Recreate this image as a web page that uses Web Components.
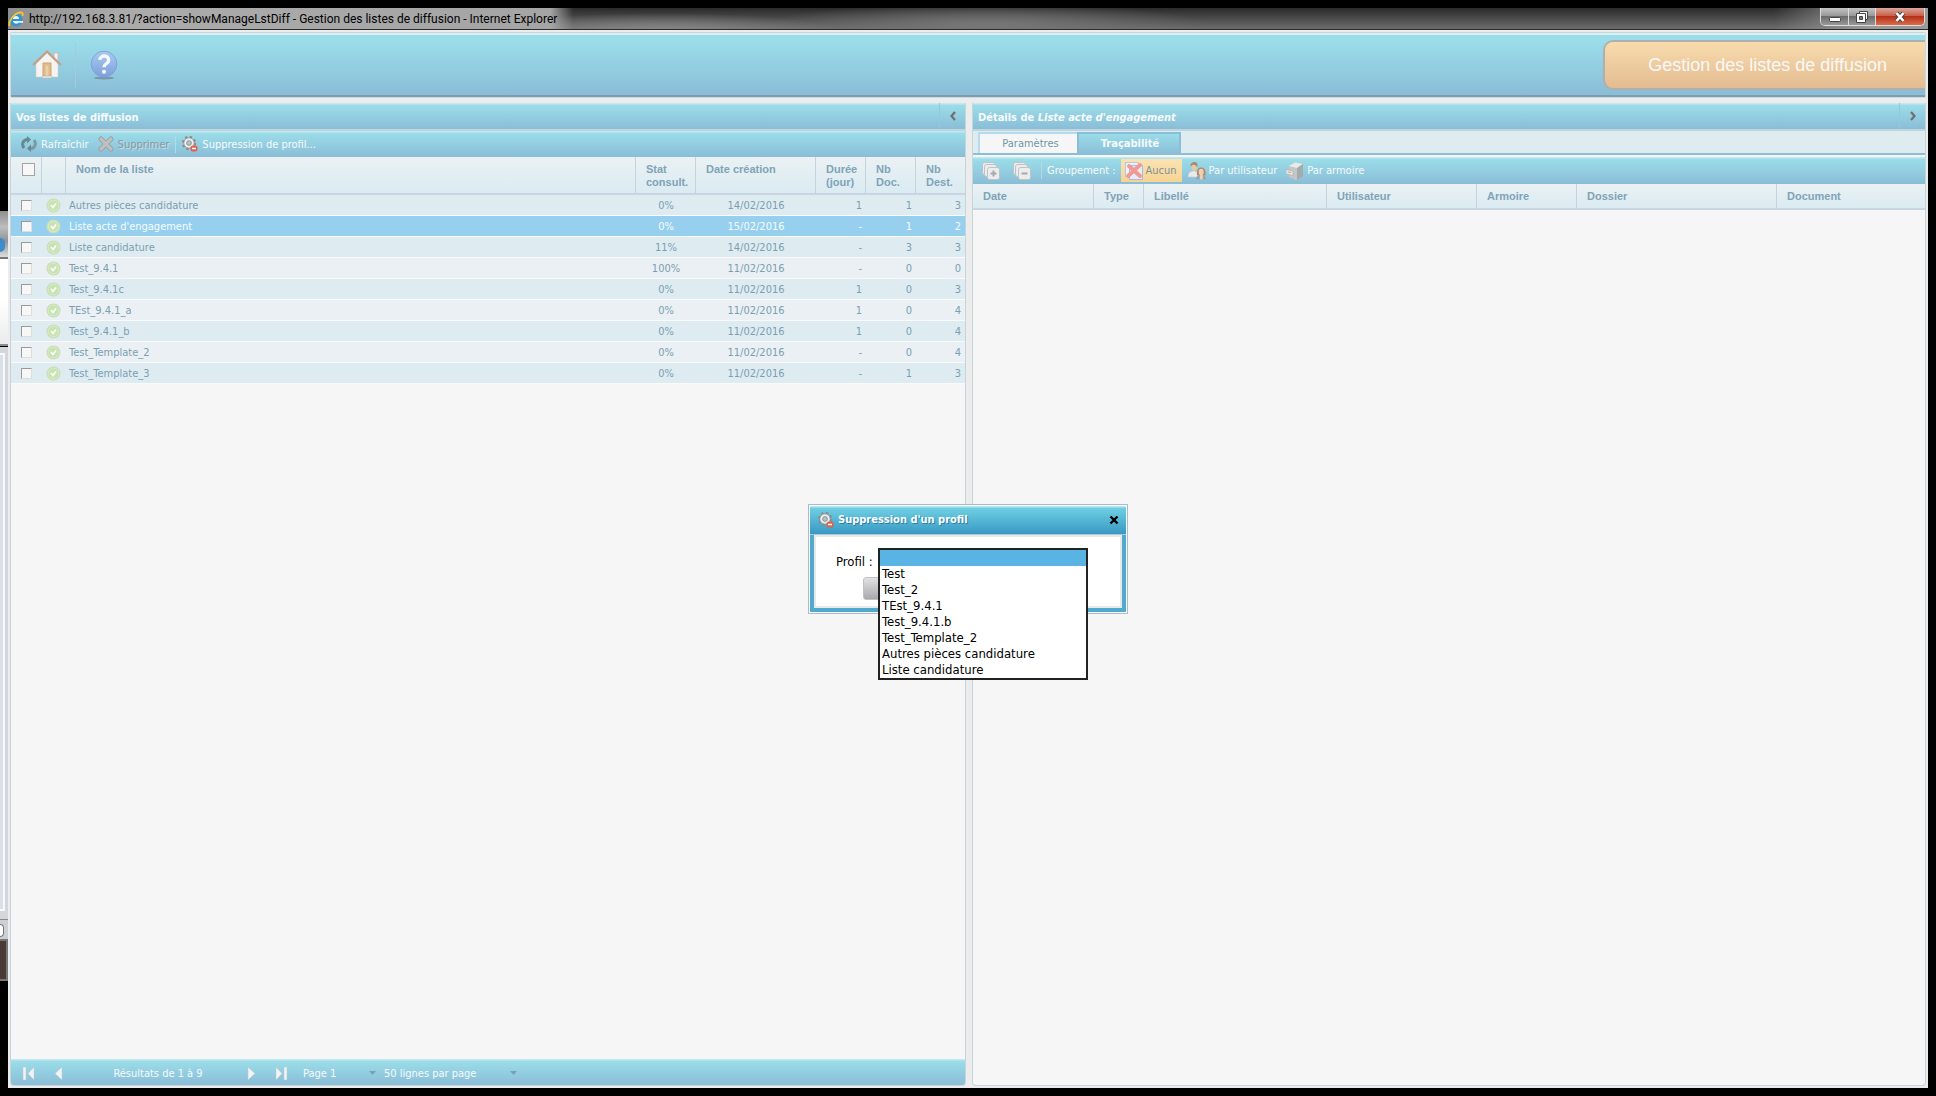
<!DOCTYPE html>
<html lang="fr">
<head>
<meta charset="utf-8">
<title>Gestion des listes de diffusion</title>
<style>
  html, body { height: 100%; }
  body {
    margin: 0;
    background: #000;
    font-family: "DejaVu Sans Condensed", "DejaVu Sans", sans-serif;
    font-size: 11px;
    line-height: 13px;
    overflow: hidden;
  }
</style>
</head>
<body>
<desktop-frame>
  <title-bar slot="title" heading="http://192.168.3.81/?action=showManageLstDiff - Gestion des listes de diffusion - Internet Explorer"></title-bar>
  <app-header heading="Gestion des listes de diffusion"></app-header>
  <split-view>
    <app-panel slot="left" arrow="left">
      <span slot="heading">Vos listes de diffusion</span>
      <tool-bar slot="bar">
        <tool-button icon="refresh">Rafraîchir</tool-button>
        <tool-button icon="cross-off" off>Supprimer</tool-button>
        <tool-separator></tool-separator>
        <tool-button icon="gear">Suppression de profil...</tool-button>
      </tool-bar>
      <diffusion-table></diffusion-table>
      <pager-bar slot="footer"></pager-bar>
    </app-panel>
    <app-panel slot="right" arrow="right">
      <span slot="heading">Détails de <i>Liste acte d'engagement</i></span>
      <tab-strip slot="bar"></tab-strip>
      <tool-bar slot="bar" wide>
        <tool-button icon="stack-plus" label="Tout déplier"></tool-button>
        <tool-button icon="stack-minus" label="Tout replier"></tool-button>
        <tool-separator></tool-separator>
        <tool-label>Groupement :</tool-label>
        <tool-button icon="cross-sheet" pressed>Aucun</tool-button>
        <tool-button icon="users">Par utilisateur</tool-button>
        <tool-button icon="cabinet">Par armoire</tool-button>
      </tool-bar>
      <history-table></history-table>
    </app-panel>
  </split-view>
  <profile-dialog slot="dialog"></profile-dialog>
</desktop-frame>

<script>
const ICONS = {
  ie: ['0 0 16 16', `
    <circle cx="8" cy="9" r="6.500" fill="#2f93d8"/>
    <path d="M5 8a3 3 0 0 1 6 0z" fill="#e8f4fb"/>
    <path d="M5 10h10v1.800h-4.500C9 13.300 5.500 13 5 10z" fill="#e8f4fb"/>
    <path d="M1.500 15C0 10 6 2.500 12 1.500c3-.3 3.200 1.500 2.300 3.500" fill="none" stroke="#f4c430" stroke-width="1.800"/>`],
  home: ['0 0 30 30', `
    <path d="M22 3h4v9h-4z" fill="#f5f3f0" stroke="#c9b8a8" stroke-width=".8"/>
    <path d="M4 14L15 3l11 11v13H4z" fill="#f6f4f2" stroke="#d5cdc6" stroke-width=".6"/>
    <path d="M1 15L15 1.500 29 15" fill="none" stroke="#c3a08c" stroke-width="2.200"/>
    <path d="M11 13h8v13h-8z" fill="#e9c191" stroke="#c99f72"/>
    <path d="M13 15h4v11h-4z" fill="#efd0a6" stroke="#d6ae80" stroke-width=".7"/>
    <path d="M10 26h10v2H10z" fill="#ececec" stroke="#bbb" stroke-width=".6"/>`],
  help: ['0 0 30 32', `
    <defs><linearGradient id="g" x1="0" y1="0" x2="0" y2="1"><stop offset="0" stop-color="#a5cdef"/><stop offset="1" stop-color="#7f9fdc"/></linearGradient></defs>
    <ellipse cx="15" cy="30" rx="11" ry="1.500" fill="#7898ad"/>
    <circle cx="15" cy="15" r="13.800" fill="url(#g)" stroke="#7fa0d8"/>
    <path d="M10.500 10.500c.5-5.500 9.500-5.500 9.500.3 0 3.500-5 3.700-5 7.700" fill="none" stroke="#f6f8fb" stroke-width="3.600"/>
    <circle cx="15" cy="23.200" r="2.200" fill="#f6f8fb"/>`],
  refresh: ['0 0 16 16', `
    <path d="M3 12C0 8 2.500 3.500 6.500 3.500" fill="none" stroke="#6b8791" stroke-width="3"/>
    <path d="M6 0l4 3.500-4 4z" fill="#6b8791"/>
    <path d="M13 4c3 4 .5 8.500-3.500 8.500" fill="none" stroke="#7c99a3" stroke-width="3"/>
    <path d="M10 16l-4-3.500 4-4z" fill="#6b8791"/>`],
  'cross-off': ['0 0 16 16', `
    <path d="M3 3l10 10M13 3L3 13" stroke="#9a9f9f" stroke-width="5" stroke-linecap="round"/>
    <path d="M3 3l10 10M13 3L3 13" stroke="#bcc0c0" stroke-width="3.200" stroke-linecap="round"/>`],
  gear: ['0 0 16 16', `
    <circle cx="7" cy="7" r="6" fill="none" stroke="#8d8d8d" stroke-width="2.400" stroke-dasharray="2.400 2.312"/>
    <circle cx="7" cy="7" r="4" fill="#c9d3d6" stroke="#eee" stroke-width="2.200"/>
    <circle cx="7" cy="7" r="5.200" fill="none" stroke="#949494" stroke-width=".8"/>
    <circle cx="7" cy="7" r="2.300" fill="#a8c8d3" stroke="#8d8d8d" stroke-width=".8"/>
    <rect x="8.500" y="9.500" width="7" height="6" rx="2.500" fill="#e2604b"/>
    <path d="M10 12.500h4" stroke="#fff" stroke-width="1.500"/>`],
  'stack-plus': ['0 0 18 18', `
    <g fill="#ececec" stroke="#bcc4c7"><rect x=".5" y=".5" width="12" height="12" rx="2"/><rect x="2.500" y="2.500" width="12" height="12" rx="2"/><rect x="5.500" y="5.500" width="12" height="12" rx="2"/></g>
    <path d="M8.500 11.500h6M11.500 8.500v6" stroke="#a3abae" stroke-width="2"/>`],
  'stack-minus': ['0 0 18 18', `
    <g fill="#ececec" stroke="#bcc4c7"><rect x=".5" y=".5" width="12" height="12" rx="2"/><rect x="2.500" y="2.500" width="12" height="12" rx="2"/><rect x="5.500" y="5.500" width="12" height="12" rx="2"/></g>
    <path d="M8.500 11.500h6" stroke="#a3abae" stroke-width="2"/>`],
  'cross-sheet': ['0 0 18 18', `
    <rect x=".5" y=".5" width="13" height="14" fill="#eef1f8" stroke="#b9c6dd"/>
    <rect x="4.500" y="3.500" width="13" height="14" fill="#e6ebf5" stroke="#a9bbda"/>
    <path d="M4 4l11 10M15 3L3 14" stroke="#f09a94" stroke-width="4" stroke-linecap="round"/>`],
  users: ['0 0 18 18', `
    <path d="M0 15c0-4 2-6 5.500-6s5.500 2 5.500 6z" fill="#eaeaea" stroke="#bfc6c8" stroke-width=".6"/>
    <path d="M3 3.500C3.500.5 8.500.3 9 3.500L8.500 7C8 9.500 4.500 9.500 4 7z" fill="#e8c8a8"/>
    <path d="M2.500 4.500C2 1 5 0 6.500 0c3 0 3.500 3 2.700 5.500C8.500 3 6 3 5 2.800z" fill="#a98a70"/>
    <path d="M8 17.500c0-3 1.500-4.500 5-4.500s5 1.500 5 4.500z" fill="#8fa9b3"/>
    <path d="M9 13.500C8.500 8 10 5.500 13.200 5.500S18 8 17.500 13.500z" fill="#ab8b6c"/>
    <ellipse cx="13.200" cy="10" rx="2.500" ry="3.200" fill="#f0cfab"/>
    <path d="M11.800 13h3v4.500h-3z" fill="#f0cfab"/>`],
  cabinet: ['0 0 18 18', `
    <path d="M3 4l6-3.500L17 2v12.500L10 18l-7-3z" fill="#c4c7c8"/>
    <path d="M3 4l6-3.500L17 2l-6 4z" fill="#eaeaea"/>
    <path d="M11 6l6-4v12.500L11 18z" fill="#a5aaac"/>
    <path d="M0 7.500L7 9v4.500L0 12z" fill="#e6e6e6" stroke="#a9aeb0" stroke-width=".6"/>
    <path d="M2 10l3 .5" stroke="#d8a860" stroke-width="1.200"/>`],
  check: ['0 0 15 15', `
    <circle cx="7.500" cy="7.500" r="7" fill="#c5dfb2"/>
    <circle cx="7.500" cy="7.500" r="5.400" fill="#c8e2b0" stroke="#e0eed6" stroke-width=".8"/>
    <path d="M5 7l2 2.500L10 5.500" fill="none" stroke="#fafcf8" stroke-width="1.800"/>`],
  left: ['0 0 6 10', `<path d="M5 1L1.500 5 5 9" fill="none" stroke="#6f6f6f" stroke-width="2.200"/>`],
  right: ['0 0 6 10', `<path d="M1 1l3.500 4L1 9" fill="none" stroke="#6f6f6f" stroke-width="2.200"/>`],
  first: ['0 0 12 13', `<path d="M0 0h3v13H0zM11 0v13L5 6.500z" fill="#f3f3f3" stroke="#b9c7cc" stroke-width=".5"/>`],
  prev: ['0 0 8 13', `<path d="M7 0v13L0 6.500z" fill="#f3f3f3" stroke="#b9c7cc" stroke-width=".5"/>`],
  next: ['0 0 8 13', `<path d="M1 0v13l7-6.500z" fill="#f3f3f3" stroke="#b9c7cc" stroke-width=".5"/>`],
  last: ['0 0 12 13', `<path d="M9 0h3v13H9zM1 0v13l6-6.500z" fill="#f3f3f3" stroke="#b9c7cc" stroke-width=".5"/>`],
  close: ['0 0 10 10', `<path d="M1.500 1.500l7 7M8.500 1.500l-7 7" stroke="#000" stroke-width="2.400"/>`],
  'win-min': ['0 0 12 12', `<rect x=".5" y="6.500" width="11" height="4" rx="1" fill="#fff" stroke="#444"/>`],
  'win-max': ['0 0 12 12', `<path d="M3.500.5h8v8h-8z" fill="#fff" stroke="#444"/><path d="M.5 2.500h9v9h-9z" fill="#fff" stroke="#444"/><path d="M3.500 5.500h3v3h-3z" fill="#777" stroke="#444"/>`],
  'win-close': ['0 0 12 12', `<path d="M2.500 2l7 8M9.500 2l-7 8" stroke="#444" stroke-width="4.200"/><path d="M2.500 2l7 8M9.500 2l-7 8" stroke="#fff" stroke-width="2.600"/>`],
};

function icon(name, w, h) {
  const [box, body] = ICONS[name];
  return `<svg viewBox="${box}" width="${w}" height="${h || w}" aria-hidden="true">${body}</svg>`;
}

function define(tag, render) {
  customElements.define(tag, class extends HTMLElement {
    connectedCallback() {
      if (this.shadowRoot) return;
      this.attachShadow({ mode: 'open' });
      this.shadowRoot.innerHTML = `
        <style>
          :host { display: block; box-sizing: border-box; }
          *, *::before { box-sizing: border-box; }
          svg { display: block; flex: none; }
          button, select, input { font: inherit; color: inherit; margin: 0; padding: 0; border: 0; background: none; }
        </style>` + render(this);
    }
  });
}

/* FRAME */
define('desktop-frame', () => `
  <style>
    :host { display: grid; grid-template-columns: 8px 1fr 8px; height: 100vh; padding: 8px 0; background: #000; }
    .behind { display: flex; flex-direction: column; padding-top: 203px; overflow: hidden; }
    .tray { flex: 0 0 48px; background: linear-gradient(#8f8f8f, #bdbdbd 16px, #8d9298 30px, #ddd); border-bottom: 2px solid #777; display: flex; align-items: end; }
    .tray i { width: 5px; height: 14px; margin-bottom: 5px; background: #3d8cc8; border-radius: 0 7px 7px 0; }
    .sheet { flex: 0 0 87px; background: linear-gradient(#fff 50%, #e9ebec); border-bottom: 2px solid #888d8f; }
    .side { flex: 0 1 572px; margin-top: 1px; background: #d4d7da; padding: 6px 3px 8px 0; }
    .side div { height: 100%; background: #dadfe8; border: 2px solid #f8f8ff; border-left: 0; }
    .knob { flex: 0 0 20px; border-top: 1px solid #888; background: #ccd0d3; padding-top: 4px; }
    .knob i { display: block; width: 4px; height: 13px; border: 1px solid #777; border-left: 0; border-radius: 0 6px 6px 0; background: #fff; }
    .task { flex: 0 0 42px; background: #4a3a36; border: 2px solid #777; border-left: 0; }
    .window { display: flex; flex-direction: column; min-width: 0; background: #ececec; position: relative; }
    .content { flex: 1; display: flex; flex-direction: column; min-height: 0; padding: 2px; gap: 5px; }
    .overlay { position: absolute; inset: 22px 0 0; display: flex; align-items: center; justify-content: center; }
  </style>
  <div class="behind">
    <div class="tray"><i></i></div><div class="sheet"></div><div class="side"><div></div></div>
    <div class="knob"><i></i></div><div class="task"></div>
  </div>
  <div class="window">
    <slot name="title"></slot>
    <div class="content"><slot></slot></div>
    <div class="overlay"><slot name="dialog"></slot></div>
  </div>`);

define('title-bar', el => `
  <style>
    :host {
      display: flex; align-items: flex-start; height: 22px; color: #000;
      border-bottom: 1px solid #2a2d2a;
      font: 12px/22px Roboto, "Noto Sans", sans-serif;
      background:
        linear-gradient(90deg, transparent 92%, #999 97%),
        radial-gradient(ellipse 220px 22px at 51% 80%, #777, transparent),
        radial-gradient(ellipse 180px 18px at 34% 110%, #888, transparent),
        linear-gradient(#2a2a2a, #6c6c6c);
    }
    .name { display: flex; align-items: center; gap: 5px; height: 21px; padding-right: 16px; white-space: nowrap;
      background: linear-gradient(90deg, #8e8e8e, #ababab 20%, #a5a5a5 96%, transparent); }
    .buttons { display: flex; margin-left: auto; margin-right: 3px; height: 18px; border: 1px solid #ddd; border-top: 0; border-radius: 0 0 5px 5px; overflow: hidden; }
    button { width: 28px; display: grid; place-items: center; background: linear-gradient(#c4c4c4, #999 45%, #6b6b6b 50%, #999); border-right: 1px solid #ddd; }
    button:nth-child(2) { width: 27px; }
    button:last-child { width: 48px; border: 0; background: linear-gradient(#dba79b, #c9604c 45%, #b33018 50%, #dd6c4c); }
  </style>
  <span class="name">${icon('ie', 16)}<span>${el.getAttribute('heading')}</span></span>
  <div class="buttons">
    <button aria-label="Réduire">${icon('win-min', 12)}</button>
    <button aria-label="Restaurer">${icon('win-max', 12)}</button>
    <button aria-label="Fermer">${icon('win-close', 12)}</button>
  </div>`);

/* HEADER */
define('app-header', el => `
  <style>
    :host { display: flex; align-items: center; height: 66px; border: 1px solid #cbd9de; border-top-color: #c2d7dc; border-radius: 2px;
      background: linear-gradient(#deedf1 2px, #9bdde9 2px, #9bdde9 8px, #8abdd7 62px, #7d9db0 62px); }
    a { display: grid; place-items: center; height: 46px; }
    .home { width: 65px; padding-left: 8px; border-right: 1px solid #a3cbdf; }
    .help { width: 56px; }
    h1 { display: flex; align-items: center; margin: 0 0 0 auto; height: 50px; padding: 0 38px 0 43px; color: #f8f8f8;
      font: 18px/22px "Liberation Sans", Arial, sans-serif;
      border: 2px solid #b0afb0; border-right: 0; border-radius: 10px 0 0 10px; background: linear-gradient(#f8dcae, #e3bc90); }
  </style>
  <a class="home" href="#" aria-label="Accueil">${icon('home', 30)}</a>
  <a class="help" href="#" aria-label="Aide">${icon('help', 28, 30)}</a>
  <h1>${el.getAttribute('heading')}</h1>`);

define('split-view', () => `
  <style>
    :host { flex: 1; min-height: 0; display: grid; grid-template-columns: 956fr 954fr; gap: 6px; }
    ::slotted(*) { min-width: 0; }
  </style>
  <slot name="left"></slot><slot name="right"></slot>`);

define('app-panel', el => `
  <style>
    :host { display: flex; flex-direction: column; border: 1px solid #c3d5dd; border-top: 0; border-radius: 0 0 4px 4px; background: #f6f6f6; overflow: hidden; }
    header { display: flex; align-items: stretch; height: 28px; color: #f8fbfc; border-bottom: 2px solid #bfd5de;
      background: linear-gradient(#c5e8ef 1px, #9bdde9 2px, #8abdd7); }
    h2 { flex: 1; margin: 0; padding: 2px 0 0 5px; font-size: 11px; line-height: 26px; }
    button { width: 26px; display: grid; place-items: center; border-left: 1px solid #97c6dc; }
    main { flex: 1; }
  </style>
  <header><h2><slot name="heading"></slot></h2>
    <button aria-label="Replier">${icon(el.getAttribute('arrow'), 6, 10)}</button></header>
  <slot name="bar"></slot>
  <main><slot></slot></main>
  <slot name="footer"></slot>`);

/* TOOLBARS */
define('tool-bar', () => `
  <style>
    :host { display: flex; align-items: center; gap: 3px; height: 26px; padding: 0 7px; color: #f6fafb;
      background: linear-gradient(#c5e8ef 1px, #9bdde9 2px, #8abdd7); }
    :host([wide]) { height: 27px; padding: 0 6px; }
  </style><slot></slot>`);

define('tool-button', el => {
  const big = el.parentElement.hasAttribute('wide');
  return `
  <style>
    button { display: flex; align-items: center; gap: ${big ? 3 : 4}px; height: 23px; padding: 0 3px; white-space: nowrap; }
    :host([off]) button { color: #8a9ba2; text-shadow: 1px 1px #c4dbe2; }
    :host([pressed]) button { color: #7f9197; background: linear-gradient(#fae3b4, #f7d391); padding: 0 5px 0 4px; }
    :host([label]) button { width: 28px; }
  </style>
  <button type="button" aria-label="${el.getAttribute('label') || el.textContent}"${el.hasAttribute('off') ? ' disabled' : ''}>
    ${icon(el.getAttribute('icon'), big ? 18 : 16)}<slot></slot></button>`;
});

define('tool-separator', () => `<style>:host { width: 1px; height: 17px; background: #b5d9e6; }</style>`);
define('tool-label', () => `<style>:host { white-space: nowrap; padding: 0 2px; }</style><slot></slot>`);

define('tab-strip', () => `
  <style>
    :host { display: flex; align-items: flex-end; height: 26px; padding: 0 5px; background: #deecf0; border-bottom: 2px solid #f6f6f6; box-shadow: inset 0 -2px #8abfd7; }
    button { width: 99px; height: 21px; margin-bottom: 2px; padding-left: 4px; color: #7296a8; background: #f6f6f6; border: solid #b3dcee; border-width: 2px 0 0 2px; }
    [aria-selected=true] { width: 104px; height: 23px; margin: 0; padding: 0 0 2px 2px; font-weight: bold; color: #f8fbfc; background: linear-gradient(#9adce8, #8abdd7); border: 2px solid #8abdd7; border-bottom: 0; }
  </style>
  <button role="tab">Paramètres</button><button role="tab" aria-selected="true">Traçabilité</button>`);

/* TABLES */
const TABLE_CSS = `
  table { width: 100%; table-layout: fixed; border-collapse: separate; border-spacing: 0; color: #7b9fb1; }
  thead { background: linear-gradient(#ebf1f3, #d9ebf2); }
  th { padding: 6px 0 4px 10px; text-align: left; vertical-align: top; color: #7fa3b8; font: bold 11px/13px "Liberation Sans", Arial, sans-serif;
    border-right: 1px solid #c6d2de; border-bottom: 2px solid #c9d5e2; }
  th:last-child { border-right: 0; }`;

const ROWS = [
  ['Autres pièces candidature', '0%', '14/02/2016', '1', '1', '3'],
  ["Liste acte d'engagement", '0%', '15/02/2016', '-', '1', '2'],
  ['Liste candidature', '11%', '14/02/2016', '-', '3', '3'],
  ['Test_9.4.1', '100%', '11/02/2016', '-', '0', '0'],
  ['Test_9.4.1c', '0%', '11/02/2016', '1', '0', '3'],
  ['TEst_9.4.1_a', '0%', '11/02/2016', '1', '0', '4'],
  ['Test_9.4.1_b', '0%', '11/02/2016', '1', '0', '4'],
  ['Test_Template_2', '0%', '11/02/2016', '-', '0', '4'],
  ['Test_Template_3', '0%', '11/02/2016', '-', '1', '3'],
];

define('diffusion-table', () => `
  <style>
    ${TABLE_CSS}
    th { height: 38px; }
    th:first-child { padding-left: 11px; }
    td { height: 21px; padding: 0 4px 0 3px; border-bottom: 1px solid #f8fafb; background: #eaf0f3; white-space: nowrap; text-align: right; }
    tr:nth-child(odd) td { background: #deecf1; }
    tr.selected td { background: #96d0ee; color: #f6fbfe; }
    td:first-child { padding-left: 10px; }
    td:nth-child(3) { text-align: left; }
    td:nth-child(4), td:nth-child(5) { text-align: center; padding: 0; }
    td:nth-child(2) { padding: 0 0 0 4px; }
    input { display: block; appearance: none; width: 11px; height: 11px; background: #f7f7f7; border: 1px solid #999; border-right-color: #ddd; border-bottom-color: #ddd; }
    th input { width: 13px; height: 13px; border-color: #a3a3a3; }
  </style>
  <table>
    <colgroup><col style="width:31px"><col style="width:24px"><col><col style="width:60px"><col style="width:120px"><col style="width:50px"><col style="width:50px"><col style="width:49px"></colgroup>
    <thead><tr><th><input type="checkbox" aria-label="Tout sélectionner"></th><th></th><th>Nom de la liste</th><th>Stat<br>consult.</th><th>Date création</th><th>Durée<br>(jour)</th><th>Nb<br>Doc.</th><th>Nb<br>Dest.</th></tr></thead>
    <tbody>${ROWS.map((r, i) => `<tr${i === 1 ? ' class="selected"' : ''}>
      <td><input type="checkbox" aria-label="${r[0]}"></td><td>${icon('check', 15)}</td>${r.map(c => `<td>${c}</td>`).join('')}</tr>`).join('')}
    </tbody>
  </table>`);

define('history-table', () => `
  <style>${TABLE_CSS} th { height: 26px; }</style>
  <table>
    <colgroup><col style="width:121px"><col style="width:50px"><col style="width:183px"><col style="width:150px"><col style="width:100px"><col style="width:200px"><col></colgroup>
    <thead><tr><th>Date</th><th>Type</th><th>Libellé</th><th>Utilisateur</th><th>Armoire</th><th>Dossier</th><th>Document</th></tr></thead>
  </table>`);

define('pager-bar', () => `
  <style>
    :host { display: flex; align-items: center; height: 26px; padding: 2px 0 0 12px; color: #f6fafb;
      background: linear-gradient(#c5e8ef 1px, #9bdde9 2px, #8abdd7); }
    button { width: 32px; }
    button.end { width: 28px; }
    .count { width: 160px; padding-right: 18px; text-align: center; }
    select { appearance: none; width: 81px; height: 20px; outline: 0;
      background: url("data:image/svg+xml,%3Csvg xmlns='http://www.w3.org/2000/svg' width='7' height='4'%3E%3Cpath fill='%237ba0ae' d='M0 0h7L3.500 4z'/%3E%3C/svg%3E") no-repeat right 8px center; }
    select.size { width: 141px; }
  </style>
  <button aria-label="Première page">${icon('first', 12, 13)}</button>
  <button aria-label="Page précédente">${icon('prev', 8, 13)}</button>
  <span class="count">Résultats de 1 à 9</span>
  <button class="end" aria-label="Page suivante">${icon('next', 8, 13)}</button>
  <button class="end" aria-label="Dernière page">${icon('last', 12, 13)}</button>
  <select aria-label="Page"><option>Page 1</option></select>
  <select class="size" aria-label="Lignes par page"><option>50 lignes par page</option></select>`);

/* DIALOG */
const PROFILES = ['', 'Test', 'Test_2', 'TEst_9.4.1', 'Test_9.4.1.b', 'Test_Template_2', 'Autres pièces candidature', 'Liste candidature'];

define('profile-dialog', () => `
  <style>
    section { width: 320px; border: 1px solid #a5bdd2; padding: 1px; background: #fff; color: #000; }
    header { display: flex; align-items: center; gap: 4px; height: 29px; padding: 0 7px 0 8px; color: #fff; border-bottom: 1px solid #a9c9d6;
      background: linear-gradient(#b5e6f0 1px, #6fd0e2 2px, #3898c4); }
    h2 { flex: 1; margin: 0; font-size: 11px; line-height: 16px; text-shadow: 1px 1px #2f80a5; }
    .body { height: 77px; padding: 19px 0 0 20px; border: 4px solid #52a9cc; border-top: 0; box-shadow: inset 0 0 0 2px #e9e9e9; font-size: 13px; line-height: 16px; }
    .field { position: relative; padding-left: 2px; }
    select { position: absolute; left: 44px; top: -6px; width: 210px; height: 132px; padding: 0; border: 2px solid #222; border-radius: 0; background: #fff; overflow: hidden; outline: 0; }
    option { height: 16px; min-height: 16px; padding: 0 2px; line-height: 16px; color: #000; }
    option:checked { background: #5ab4e3 linear-gradient(#5ab4e3, #5ab4e3); }
    .ok { display: block; width: 100px; height: 23px; margin: 7px 0 0 29px; border: 1px solid #c2c2c2; border-radius: 3px; background: linear-gradient(#e2e2e4, #a9a9ab); }
  </style>
  <section role="dialog" aria-labelledby="t">
    <header>${icon('gear', 16)}<h2 id="t">Suppression d'un profil</h2><button aria-label="Fermer">${icon('close', 10)}</button></header>
    <div class="body">
      <div class="field"><label for="p">Profil :</label>
        <select id="p" size="8">${PROFILES.map((p, i) => `<option${i ? '' : ' selected'}>${p}</option>`).join('')}</select></div>
      <button class="ok" aria-label="Valider"></button>
    </div>
  </section>`);
</script>
</body>
</html>
